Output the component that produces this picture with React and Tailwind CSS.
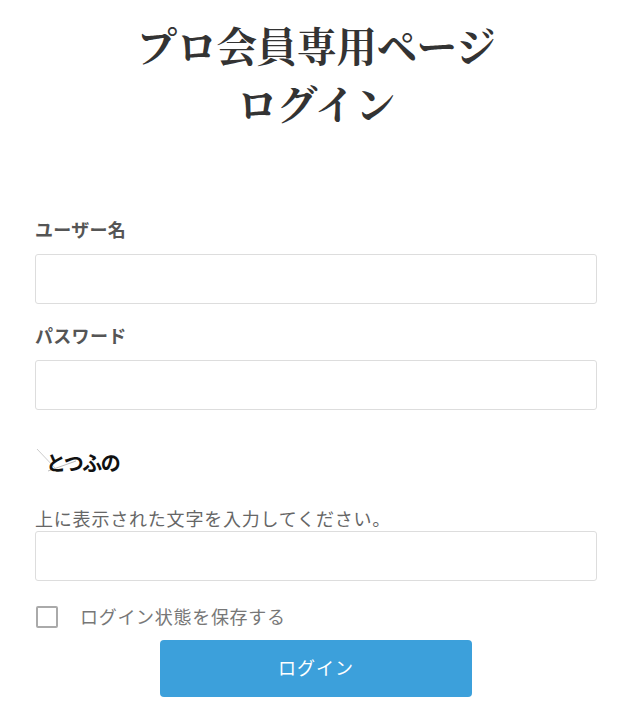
import React, { useState } from 'react';

const sans = "font-['Noto_Sans','Noto_Sans_CJK_JP',sans-serif]";

const Field = ({ label, type = 'text' }) => (
  <div>
    <label className="block text-[18px] font-bold text-[#555] leading-6 mb-[12px] tracking-[0.3px]">{label}</label>
    <input type={type} className="block w-full h-[50px] border border-[#ddd] rounded-[3px] bg-white px-3 outline-none" />
  </div>
);

const Captcha = () => (
  <svg width="90" height="30" viewBox="0 0 90 30" className="block">
    <line x1="1" y1="2" x2="20" y2="22" stroke="#ccc" strokeWidth="1" />
    <line x1="12" y1="24" x2="40" y2="14" stroke="#bbb" strokeWidth="1" />
    <text x="10" y="24" fontSize="20" fontWeight="bold" fill="#111" fontFamily="'Noto Sans CJK JP', sans-serif" letterSpacing="-1.5">とつふの</text>
  </svg>
);

export default function App() {
  const [remember, setRemember] = useState(false);

  return (
    <div className={`bg-white min-h-[723px] pl-[35px] pr-[33px] pt-[16px] ${sans}`}>
      <h1 className="text-center text-[40.5px] font-bold leading-[58px] text-[#333] font-['Noto_Serif_CJK_JP','Noto_Serif_JP','Liberation_Serif',serif] tracking-[-0.5px]">
        プロ会員専用ページ<br />ログイン
      </h1>

      <div className="mt-[86px] flex flex-col gap-[20px]">
        <Field label="ユーザー名" />
        <Field label="パスワード" type="password" />
      </div>

      <div className="mt-[37px] ml-[1px]">
        <Captcha />
      </div>

      <p className="mt-[30px] text-[18px] text-[#666] leading-6 tracking-[0.8px]">上に表示された文字を入力してください。</p>
      <input type="text" className="block w-full h-[50px] border border-[#ddd] rounded-[3px] bg-white px-3 outline-none" />

      <label className="mt-[24px] flex items-center cursor-pointer">
        <span
          onClick={() => setRemember(!remember)}
          className="w-[22px] h-[22px] border-2 border-[#aaa] rounded-[2px] bg-white ml-[1px]"
        />
        <span className="ml-[22px] text-[18px] text-[#777] leading-6 tracking-[0.7px]">ログイン状態を保存する</span>
      </label>

      <div className="mt-[11px] flex justify-center">
        <button className="w-[312px] h-[57px] bg-[#3ca0db] rounded-[4px] text-white text-[18px] tracking-[1px]">
          ログイン
        </button>
      </div>
    </div>
  );
}
